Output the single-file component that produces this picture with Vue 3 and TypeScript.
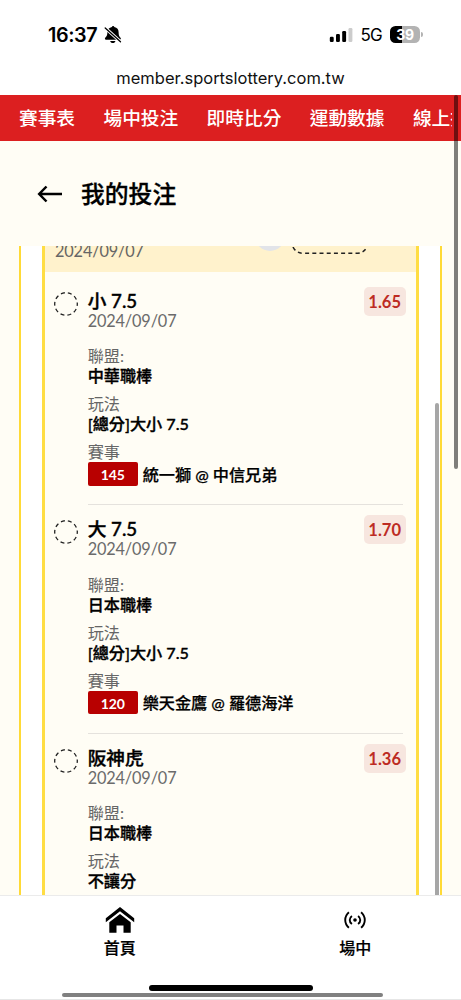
<script setup lang="ts">
interface Bet {
  pick: string
  date: string
  odds: string
  league: string
  play: string
  code: string
  match: string
}

const navItems: string[] = ['賽事表', '場中投注', '即時比分', '運動數據', '線上投注']

const bets: Bet[] = [
  { pick: '小 7.5', date: '2024/09/07', odds: '1.65', league: '中華職棒', play: '[總分]大小 7.5', code: '145', match: '統一獅 @ 中信兄弟' },
  { pick: '大 7.5', date: '2024/09/07', odds: '1.70', league: '日本職棒', play: '[總分]大小 7.5', code: '120', match: '樂天金鷹 @ 羅德海洋' },
  { pick: '阪神虎', date: '2024/09/07', odds: '1.36', league: '日本職棒', play: '不讓分', code: '', match: '' },
]
</script>

<template>
  <div class="screen">
    <header class="status">
      <div class="clock">
        <span class="time">16:37</span>
        <svg class="bell" width="18" height="18" viewBox="0 0 18 18">
          <path d="M7.900 1a1.200 1 0 0 1 2.400 0c2.900.5 4.300 2.500 4.300 5.200 0 3.200.6 4.200 1.900 5.600.8 1 .3 1.900-.8 1.900H2c-1 0-1.500-1-.8-1.900C2.500 10.400 3.400 9.400 3.400 6.200 3.400 3.500 5.100 1.500 7.900 1Z" />
          <path d="M6.200 15h5.200c-.3 1.400-1.300 2.100-2.600 2.100s-2.300-.7-2.600-2.100Z" />
          <path d="M0 .8 17.300 16.400" stroke="#fff" stroke-width="3.200" />
          <path d="M1.200 1.900 16.500 15.700" stroke="#000" stroke-width="1.300" stroke-linecap="round" />
        </svg>
      </div>
      <div class="indicators">
        <svg class="signal" width="24" height="16" viewBox="0 0 24 16">
          <rect x="0.800" y="9.800" width="3.900" height="5.200" rx="1.200" />
          <rect x="7" y="7" width="3.900" height="8" rx="1.200" />
          <rect x="13.200" y="4" width="3.900" height="11" rx="1.200" />
          <rect x="19.500" y="1" width="3.900" height="14" rx="1.200" fill="#ccc" />
        </svg>
        <span class="network">5G</span>
        <span class="battery">39</span>
        <span class="battery-tip"></span>
      </div>
    </header>
    <div class="address">member.sportslottery.com.tw</div>

    <div class="nav-bar">
      <nav class="nav">
        <span v-for="item in navItems" :key="item">{{ item }}</span>
      </nav>
    </div>

    <div class="heading">
      <svg width="26" height="20" viewBox="0 0 26 20" fill="none" stroke="#000" stroke-width="2.500">
        <path d="M9.500 2.500 2.200 10l7.300 7.500M2.500 10H25" />
      </svg>
      <h1>我的投注</h1>
    </div>

    <main class="content">
      <div class="outer">
        <div class="inner">
          <div class="band">
            <span class="band-date">2024/09/07</span>
            <span class="dot"></span>
            <svg class="stamp" width="76" height="9" viewBox="0 0 76 9" fill="none" stroke="#222" stroke-width="1.500" stroke-dasharray="4 3.200">
              <path d="M1 0Q4 6.300 12 6.300H64Q72 6.300 75 0" />
            </svg>
          </div>
          <article v-for="bet in bets" :key="bet.pick" class="bet">
            <svg class="ring" width="26" height="26" viewBox="0 0 26 26">
              <circle cx="13" cy="13" r="11.300" fill="none" stroke="#222" stroke-width="1.300" stroke-dasharray="4 3.100" stroke-dashoffset="2" />
            </svg>
            <div class="details">
              <span class="odds">{{ bet.odds }}</span>
              <div class="pick">{{ bet.pick }}</div>
              <div class="date">{{ bet.date }}</div>
              <div class="field">
                <div class="label">聯盟:</div>
                <div class="value">{{ bet.league }}</div>
              </div>
              <div class="field">
                <div class="label">玩法</div>
                <div class="value">{{ bet.play }}</div>
              </div>
              <div v-if="bet.code" class="field">
                <div class="label">賽事</div>
                <div class="match">
                  <span class="code">{{ bet.code }}</span>
                  <span>{{ bet.match }}</span>
                </div>
              </div>
            </div>
          </article>
        </div>
      </div>
      <span class="list-scroll"></span>
    </main>

    <footer class="tabs">
      <div class="tab">
        <svg width="30" height="28" viewBox="0 0 30 28">
          <path d="M.8 11.300 15 0l14.200 11.300v4L15 4.200.8 15.300Z" />
          <path d="M4.300 15.200 15 7l10.700 8.200v10.600h-7.200v-7.300h-7v7.300H4.300Z" />
        </svg>
        <span>首頁</span>
      </div>
      <div class="tab">
        <svg width="24" height="28" viewBox="0 0 24 28" fill="none" stroke="#000" stroke-width="1.900">
          <circle cx="12" cy="13" r="1.800" fill="#000" stroke="none" />
          <path d="M8.900 8.900c-2.900 2.200-2.900 6 0 8.200M15.100 8.900c2.900 2.200 2.900 6 0 8.200M5.900 5.200c-4.900 4.400-4.900 11.200 0 15.600M18.100 5.200c4.900 4.400 4.900 11.200 0 15.600" />
        </svg>
        <span>場中</span>
      </div>
    </footer>
    <span class="page-scroll"></span>
    <span class="home-bar"></span>
    <span class="wide-scroll"></span>
  </div>
</template>

<style>
body {
  margin: 0;
}
</style>

<style scoped>
.screen {
  position: relative;
  display: flex;
  flex-direction: column;
  width: 461px;
  height: 1000px;
  overflow: hidden;
  background: #fffdf5;
  color: #000;
  font-family: Lato, "Noto Sans CJK TC", sans-serif;
}
.status {
  display: flex;
  flex: none;
  justify-content: space-between;
  box-sizing: border-box;
  height: 62px;
  padding: 22px 38px 0 48px;
  background: #fff;
  font-family: Inter, sans-serif;
}
.clock,
.indicators {
  display: flex;
  align-items: center;
  height: 25px;
}
.time {
  width: 51px;
  font-size: 19.800px;
  font-weight: 600;
  letter-spacing: -0.400px;
  white-space: nowrap;
}
.bell {
  margin-left: 4.500px;
}
.network {
  width: 22px;
  margin: 0 7.500px 0 7.500px;
  font-size: 17px;
  letter-spacing: -0.800px;
}
.battery {
  width: 30px;
  height: 17px;
  border-radius: 5.500px;
  background: linear-gradient(90deg, #000 39%, #b3b3b3 39%);
  color: #fff;
  font-size: 14px;
  font-weight: 700;
  letter-spacing: -0.300px;
  line-height: 17px;
  text-align: center;
}
.battery-tip {
  width: 2px;
  height: 5px;
  margin-left: 1px;
  border-radius: 0 2px 2px 0;
  background: #b3b3b3;
}
.address {
  flex: none;
  height: 33px;
  background: #fff;
  font-family: Inter, sans-serif;
  font-size: 16.500px;
  line-height: 33px;
  text-align: center;
  color: #111;
}
.nav-bar {
  flex: none;
  height: 46px;
  background: #dc1f20;
}
.nav {
  display: flex;
  gap: 28.400px;
  box-sizing: border-box;
  width: 452px;
  height: 46px;
  padding-left: 19px;
  overflow: hidden;
  color: #fff;
  font-size: 18.700px;
  font-weight: 500;
  line-height: 46px;
  white-space: nowrap;
}
.heading {
  display: flex;
  flex: none;
  align-items: center;
  gap: 18px;
  height: 105px;
  padding-left: 37px;
}
.heading h1 {
  margin: 0;
  font-size: 23.800px;
  font-weight: 500;
  line-height: 32px;
  -webkit-text-stroke: 0.300px #000;
}
.content {
  position: relative;
  flex: none;
  height: 649px;
  overflow: hidden;
}
.outer {
  display: flex;
  justify-content: center;
  box-sizing: border-box;
  width: 423px;
  height: 649px;
  margin-left: 19px;
  border: solid #ffda36;
  border-width: 0 2px;
  background: #fff;
}
.inner {
  box-sizing: border-box;
  width: 377px;
  margin-right: 1px;
  border: solid #ffdd43;
  border-width: 0 3px;
  background: #fffdf5;
}
.band {
  position: relative;
  height: 26px;
  margin-bottom: 4.500px;
  overflow: hidden;
  background: #fff2cc;
}
.band-date {
  display: block;
  margin: -5px 0 0 10.500px;
  color: #666;
  font-size: 16.300px;
  letter-spacing: -0.150px;
  line-height: 20px;
}
.dot {
  position: absolute;
  top: -25px;
  left: 210px;
  width: 30px;
  height: 30px;
  border-radius: 50%;
  background: #e2e4e9;
}
.stamp {
  position: absolute;
  top: 0.500px;
  left: 247.500px;
}
.bet {
  display: flex;
  height: 228.700px;
  overflow: hidden;
}
.ring {
  flex: none;
  margin: 14px 8.500px 0 8.700px;
}
.details {
  position: relative;
  box-sizing: border-box;
  width: 315.500px;
  height: 228.700px;
  padding-top: 14px;
  border-bottom: 1px solid #e5e2dd;
}
.odds {
  position: absolute;
  top: 10px;
  right: -2.500px;
  width: 42px;
  height: 29px;
  border-radius: 5px;
  background: #f7e6df;
  color: #bd2b23;
  font-size: 16.500px;
  font-weight: 700;
  line-height: 30px;
  text-align: center;
}
.pick {
  font-size: 18.700px;
  font-weight: 500;
  line-height: 20px;
  -webkit-text-stroke: 0.400px #000;
}
.date {
  margin-bottom: 15.500px;
  color: #6b6b6b;
  font-size: 16.300px;
  letter-spacing: -0.150px;
  line-height: 20px;
}
.field {
  height: 48px;
  font-size: 16.150px;
  line-height: 20px;
}
.label {
  color: #666;
  font-weight: 400;
}
.value {
  font-weight: 500;
  -webkit-text-stroke: 0.350px #000;
}
.match {
  display: flex;
  align-items: center;
  gap: 5px;
  height: 24px;
  font-weight: 500;
  line-height: 25px;
  -webkit-text-stroke: 0.250px #000;
}
.code {
  width: 50px;
  height: 23.500px;
  border-radius: 2px;
  background: #b80000;
  color: #fff;
  font-size: 14px;
  font-weight: 700;
  letter-spacing: -0.200px;
  text-align: center;
  -webkit-text-stroke: 0;
}
.list-scroll {
  position: absolute;
  top: 157px;
  left: 435px;
  width: 4px;
  height: 500px;
  border-radius: 2px;
  background: #a6a6a6;
}
.tabs {
  display: flex;
  flex: none;
  box-sizing: border-box;
  height: 105px;
  padding: 11px 0 0 2px;
  border-top: 1.500px solid #ebebeb;
  border-bottom: 1px solid #e6e6e6;
  background: #fff;
}
.tab {
  display: flex;
  flex: none;
  flex-direction: column;
  align-items: center;
  width: 235.500px;
  font-size: 16px;
  font-weight: 500;
  line-height: 26px;
  -webkit-text-stroke: 0.200px #000;
}
.page-scroll {
  position: absolute;
  top: 95px;
  left: 454px;
  width: 4px;
  height: 374px;
  border-radius: 2px;
  background: rgba(0, 0, 0, 0.5);
}
.home-bar {
  position: absolute;
  top: 984.500px;
  left: 148.500px;
  width: 164px;
  height: 6px;
  border-radius: 3px;
  background: #000;
}
.wide-scroll {
  position: absolute;
  top: 993px;
  left: 61.500px;
  width: 321px;
  height: 4px;
  border-radius: 2px;
  background: #808080;
}
</style>
